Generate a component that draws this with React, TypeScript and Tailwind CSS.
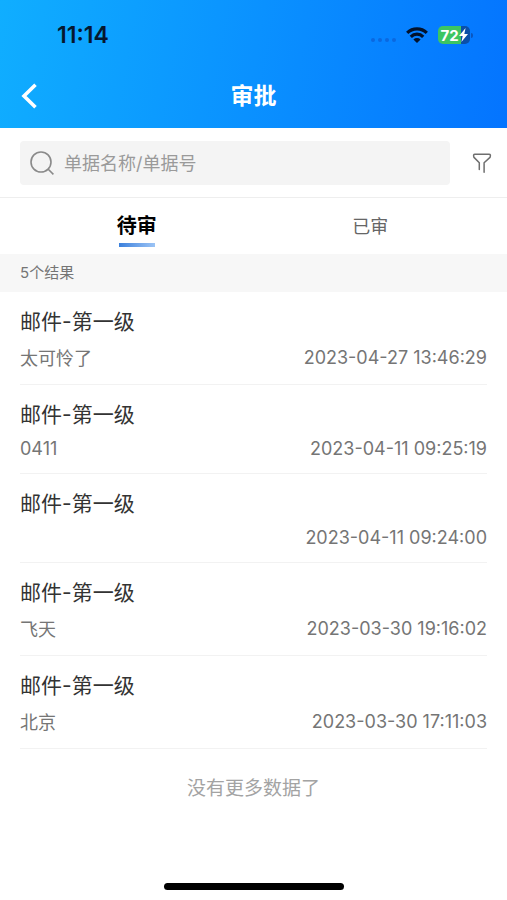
type Approval = {
    id: number;
    title: string;
    note: string;
    time: string;
};

const approvals: Approval[] = [
    { id: 1, title: '邮件-第一级', note: '太可怜了', time: '2023-04-27 13:46:29' },
    { id: 2, title: '邮件-第一级', note: '0411', time: '2023-04-11 09:25:19' },
    { id: 3, title: '邮件-第一级', note: '', time: '2023-04-11 09:24:00' },
    { id: 4, title: '邮件-第一级', note: '飞天', time: '2023-03-30 19:16:02' },
    { id: 5, title: '邮件-第一级', note: '北京', time: '2023-03-30 17:11:03' },
];

function StatusBar() {
    return (
        <div className="flex h-16 items-center justify-between pt-[6px] pr-[34px] pl-[57px]">
            <span className="text-[23px] font-semibold text-[#06172e]">11:14</span>
            <div className="flex items-center gap-[10px]">
                <div className="flex gap-[3px] pt-[10px]">
                    <span className="size-1 rounded-full bg-[#0a68e0]" />
                    <span className="size-1 rounded-full bg-[#0a68e0]" />
                    <span className="size-1 rounded-full bg-[#0a68e0]" />
                    <span className="size-1 rounded-full bg-[#0a68e0]" />
                </div>
                <svg className="h-4 w-[22px]" viewBox="0 0 22 16" fill="none" stroke="#03122b" strokeWidth="3.2">
                    <path d="M1.2 5.8a14 14 0 0 1 19.6 0" />
                    <path d="M4.8 9.8a8.7 8.7 0 0 1 12.4 0" />
                    <path d="M11 16l-3.6-3.6a5.1 5.1 0 0 1 7.2 0z" fill="#03122b" stroke="none" />
                </svg>
                <div className="flex items-center gap-px">
                    <div className="flex h-[18px] w-8 items-center justify-center rounded-[5px] bg-linear-to-r from-[#3cc562] from-72% to-[#0b4fa8] to-72% text-white">
                        <span className="text-[15px] leading-none font-bold">72</span>
                        <svg className="h-[14px] w-[9px]" viewBox="0 0 9 14" fill="currentColor">
                            <path d="M6.6 0L0 8h3.7L2.4 14 9 6H5.3z" />
                        </svg>
                    </div>
                    <span className="h-[5px] w-[2px] rounded-r-full bg-[#0b56bd]" />
                </div>
            </div>
        </div>
    );
}

function NavBar() {
    return (
        <div className="grid h-16 grid-cols-[1fr_auto_1fr] items-center px-5">
            <button type="button" aria-label="返回" className="w-fit text-white">
                <svg className="h-[26px] w-[18px]" viewBox="0 0 18 26" fill="none" stroke="currentColor" strokeWidth="3.6">
                    <path d="M15.5 1.8L4 13l11.5 11.2" />
                </svg>
            </button>
            <h1 className="text-[23px] font-bold text-white">审批</h1>
        </div>
    );
}

function SearchBar() {
    return (
        <div className="flex items-center gap-[21px] border-b border-[#eeeeee] pt-[13px] pr-[14px] pb-3 pl-5">
            <label className="flex h-11 min-w-0 flex-1 items-center gap-[10px] rounded bg-[#f4f4f4] pl-[10px]">
                <svg className="size-6 shrink-0" viewBox="0 0 24 24" fill="none" stroke="#8a8a8a" strokeWidth="1.6">
                    <circle cx="11" cy="11" r="10" />
                    <path d="M18 18l5.4 5.4" />
                </svg>
                <input
                    type="search"
                    aria-label="搜索单据"
                    placeholder="单据名称/单据号"
                    className="min-w-0 flex-1 bg-transparent text-[18px] text-[#333333] outline-none placeholder:text-[#9a9a9a]"
                />
            </label>
            <button type="button" aria-label="筛选" className="shrink-0">
                <svg
                    className="size-[22px]"
                    viewBox="0 0 22 22"
                    fill="none"
                    stroke="#6e6e6e"
                    strokeWidth="1.5"
                    strokeLinejoin="round"
                    strokeLinecap="round"
                >
                    <path d="M8.3 17.6v-6.8L3 5.4Q1.8 2.2 4 2.2h14q2.2 0 1 3.2l-5.9 5.4v9.4" />
                </svg>
            </button>
        </div>
    );
}

function Tabs() {
    return (
        <div role="tablist" className="grid h-14 grid-cols-2 px-5">
            <button type="button" role="tab" aria-selected="true" className="relative text-[20px] font-bold text-black">
                待审
                <span className="absolute bottom-[7px] left-1/2 h-1 w-9 -translate-x-1/2 bg-linear-to-r from-[#3a80dc] to-[#9cc4f5]" />
            </button>
            <button type="button" role="tab" aria-selected="false" className="text-[18px] text-[#666666]">
                已审
            </button>
        </div>
    );
}

function ApprovalRow({ item }: { item: Approval }) {
    return (
        <li className="border-b border-[#f2f2f2] pt-4 pb-[14px]">
            <h2 className="text-[21px] leading-7 text-[#333333]">{item.title}</h2>
            <div className="mt-2 flex min-h-[22px] items-center justify-between text-[18px] leading-[normal] text-[#757575]">
                <span>{item.note}</span>
                <time>{item.time}</time>
            </div>
        </li>
    );
}

export default function App() {
    return (
        <div className="flex min-h-screen flex-col bg-white font-['Inter','Noto_Sans_CJK_SC',sans-serif]">
            <header className="bg-linear-[100deg] from-[#10aeff] to-[#0474ff]">
                <StatusBar />
                <NavBar />
            </header>
            <SearchBar />
            <Tabs />
            <main>
                <p className="bg-[#f7f7f7] px-5 text-[15px] leading-[38px] text-[#757575]">{approvals.length}个结果</p>
                <ul className="px-5">
                    {approvals.map((item) => (
                        <ApprovalRow key={item.id} item={item} />
                    ))}
                </ul>
                <p className="py-[26px] text-center text-[19px] leading-7 text-[#a3a3a3]">没有更多数据了</p>
            </main>
            <div className="mx-auto mt-auto mb-[10px] h-[7px] w-[180px] rounded-full bg-black" />
        </div>
    );
}
